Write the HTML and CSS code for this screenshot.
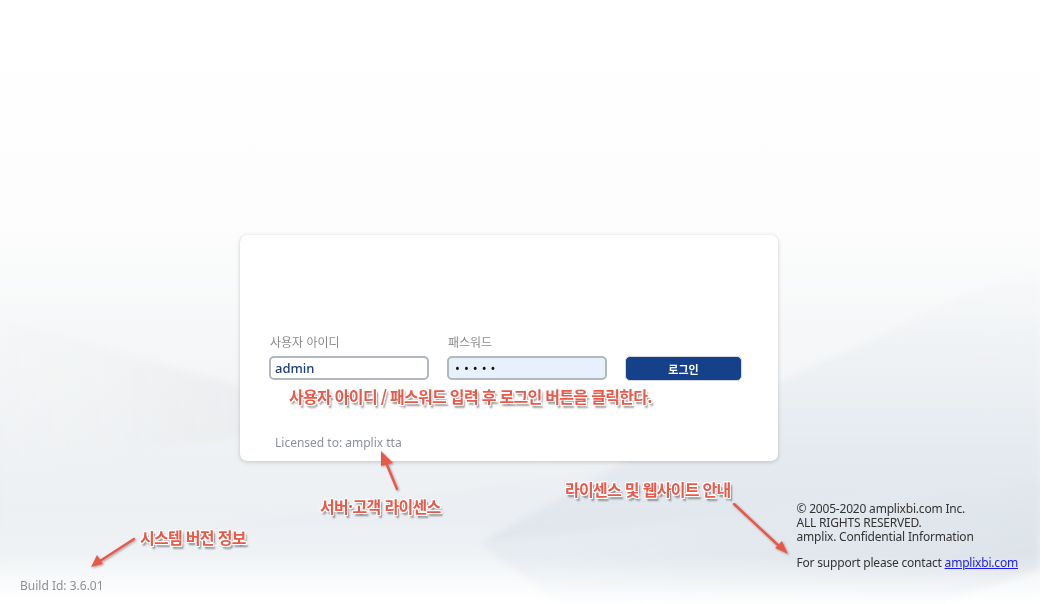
FILE: index.html
```html
<!DOCTYPE html>
<html lang="ko">
<head>
<meta charset="utf-8">
<title>amplix login</title>
<link rel="stylesheet" href="styles.css">
</head>
<body>
<div class="page">
  <svg class="bg" width="1040" height="604" viewBox="0 0 1040 604" aria-hidden="true">
    <defs>
      <linearGradient id="gR" x1="0" y1="0" x2="1" y2="1">
        <stop offset="0" stop-color="#dfe6ed" stop-opacity="0.2"/>
        <stop offset="1" stop-color="#cfd8e2" stop-opacity="0.9"/>
      </linearGradient>
      <linearGradient id="gR2" x1="0" y1="0" x2="0" y2="1">
        <stop offset="0" stop-color="#e4e9ef" stop-opacity="0"/>
        <stop offset="1" stop-color="#dde4eb" stop-opacity="0.85"/>
      </linearGradient>
      <linearGradient id="gL" x1="0" y1="0" x2="1" y2="0">
        <stop offset="0" stop-color="#f4f5f6" stop-opacity="0.3"/>
        <stop offset="1" stop-color="#e3e5e8" stop-opacity="0.9"/>
      </linearGradient>
      <linearGradient id="gB" x1="0" y1="0" x2="0" y2="1">
        <stop offset="0" stop-color="#ffffff" stop-opacity="0"/>
        <stop offset="1" stop-color="#ffffff" stop-opacity="0.95"/>
      </linearGradient>
      <filter id="soft" x="-10%" y="-10%" width="120%" height="120%">
        <feGaussianBlur stdDeviation="3"/>
      </filter>
    </defs>
    <g filter="url(#soft)">
      <polygon points="700,420 1040,260 1040,477 480,543" fill="url(#gR2)"/>
      <polygon points="480,543 1040,477 1040,570 942,604 560,604" fill="url(#gR)" opacity="0.85"/>
      <polygon points="942,604 1040,570 1040,604" fill="#eef2f5" opacity="0.8"/>
      <polygon points="0,320 360,420 0,470" fill="url(#gL)"/>
      <polygon points="0,470 360,420 600,470 0,560" fill="#eef1f3" opacity="0.6"/>
    </g>
    <rect x="0" y="555" width="1040" height="49" fill="url(#gB)"/>
  </svg>

  <main class="card">
    <form class="login-form">
      <label class="field-label" for="uid">사용자 아이디</label>
      <label class="field-label" for="pwd">패스워드</label>
      <span></span>
      <input class="field id-field" id="uid" type="text" value="admin">
      <input class="field pw-field" id="pwd" type="password" value="amplx">
      <button class="login-btn" type="button">로그인</button>
    </form>
    <p class="license">Licensed to: amplix tta</p>
  </main>

  <footer class="footer">
    <div class="build">Build Id: 3.6.01</div>
    <div class="copyright">
      <div>© 2005-2020 amplixbi.com Inc.</div>
      <div>ALL RIGHTS RESERVED.</div>
      <div>amplix. Confidential Information</div>
      <div class="support">For support please contact <a href="#">amplixbi.com</a></div>
    </div>
  </footer>

  <div class="note note-main">사용자 아이디 / 패스워드 입력 후 로그인 버튼을 클릭한다.</div>
  <div class="note note-license">서버·고객 라이센스</div>
  <div class="note note-site">라이센스 및 웹사이트 안내</div>
  <div class="note note-build">시스템 버전 정보</div>

  <svg class="arrows" width="1040" height="604" viewBox="0 0 1040 604" aria-hidden="true">
    <defs>
      <filter id="sh" x="-20%" y="-20%" width="140%" height="140%">
        <feDropShadow dx="1" dy="1" stdDeviation="0.8" flood-color="#000" flood-opacity="0.35"/>
      </filter>
    </defs>
    <g fill="#e8594a" stroke="#e8594a" stroke-linecap="round" filter="url(#sh)">
      <line x1="397" y1="489" x2="385" y2="460" stroke-width="2.5"/>
      <polygon points="381,451 393,463 381,466" stroke="none"/>
      <line x1="734" y1="504" x2="780" y2="547" stroke-width="2.5"/>
      <polygon points="788,554 775,548 782,541" stroke="none"/>
      <line x1="134" y1="539" x2="100" y2="561" stroke-width="2.5"/>
      <polygon points="91,567 97,555 103,564" stroke="none"/>
    </g>
  </svg>
</div>
</body>
</html>
```

FILE: styles.css
```css
* { box-sizing: border-box; }

html, body {
  margin: 0;
  padding: 0;
}

body {
  width: 1040px;
  height: 604px;
  overflow: hidden;
  font-family: "Noto Sans", "Noto Sans CJK KR", sans-serif;
  color: #333;
  background: linear-gradient(180deg, #ffffff 0%, #fdfdfd 35%, #f4f6f7 60%, #eaeef2 85%, #f6f8f9 100%);
}

.page {
  position: relative;
  width: 1040px;
  height: 604px;
  display: flex;
  flex-direction: column;
  padding-top: 235px;
}

.bg {
  position: absolute;
  left: 0;
  top: 0;
  z-index: 0;
}

.card {
  position: relative;
  z-index: 1;
  margin-left: 240px;
  width: 538px;
  height: 226px;
  background: #fff;
  border-radius: 7px;
  box-shadow: 0 1px 4px rgba(0, 0, 0, 0.18), 0 0 1px rgba(0, 0, 0, 0.1);
  padding: 99px 36px 0 29px;
  display: flex;
  flex-direction: column;
}

.login-form {
  display: grid;
  grid-template-columns: 160px 160px 117px;
  column-gap: 18px;
  row-gap: 6px;
  margin: 0;
}

.field-label {
  font-family: "Noto Sans CJK KR", sans-serif;
  font-size: 12px;
  line-height: 16px;
  color: #8a8a8a;
  padding-left: 1px;
}

.field {
  height: 24px;
  border: 2px solid #b3b7bf;
  border-radius: 5px;
  padding: 0 4px;
  font-family: "Noto Sans", sans-serif;
  font-size: 13px;
  outline: none;
}

.id-field {
  background: #fff;
  color: #1c3c86;
  font-weight: 500;
}

.pw-field {
  background: #e8f0fe;
  color: #111;
  letter-spacing: 4px;
  padding-left: 6px;
}

.login-btn {
  height: 25px;
  border: 1px solid #d4d8de;
  border-radius: 5px;
  background: #15408a;
  color: #fff;
  font-family: "Noto Sans CJK KR", sans-serif;
  font-weight: 700;
  font-size: 11px;
  cursor: pointer;
}

.license {
  margin: 54px 0 0 6px;
  font-size: 12px;
  line-height: 16px;
  color: #8a9099;
}

.footer {
  position: relative;
  z-index: 1;
  flex: 1;
  display: flex;
  justify-content: space-between;
  align-items: flex-end;
  padding: 0 22px 10px 20px;
}

.build {
  font-size: 12px;
  line-height: 16px;
  color: #8d8f94;
}

.copyright {
  font-size: 12px;
  line-height: 14px;
  letter-spacing: -0.2px;
  color: #333;
  margin-bottom: 24px;
}

.support {
  margin-top: 12px;
}

.support a {
  color: #1a1aee;
}

.note {
  position: absolute;
  z-index: 3;
  font-family: "Noto Sans CJK KR", sans-serif;
  font-weight: 700;
  font-size: 16px;
  line-height: 20px;
  letter-spacing: -0.7px;
  color: #e8594a;
  white-space: nowrap;
  text-shadow:
    -1px -1px 0 #fff, 1px -1px 0 #fff, -1px 1px 0 #fff, 1px 1px 0 #fff,
    0 -1px 0 #fff, 0 1px 0 #fff, -1px 0 0 #fff, 1px 0 0 #fff,
    2px 3px 2px rgba(0, 0, 0, 0.45);
}

.note-main { left: 289px; top: 386px; }
.note-license { left: 320px; top: 496px; }
.note-site { left: 565px; top: 479px; }
.note-build { left: 140px; top: 527px; }

.arrows {
  position: absolute;
  left: 0;
  top: 0;
  z-index: 4;
  pointer-events: none;
}
```
